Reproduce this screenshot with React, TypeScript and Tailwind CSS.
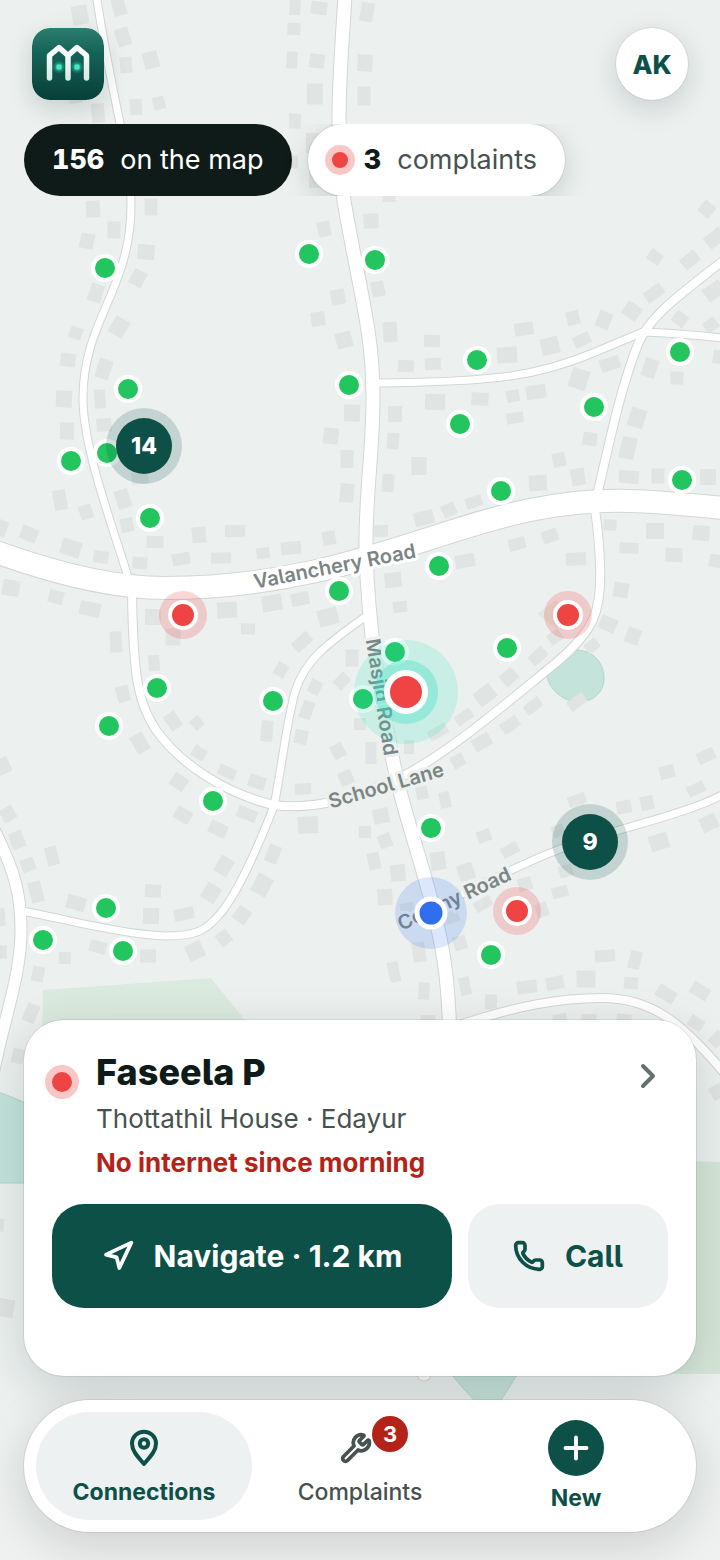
import React from 'react';
import { ChevronRight, Navigation, Phone, Plus, Wrench } from 'lucide-react';

type Building = [x: number, y: number, w: number, h: number, turn: number];
type Point = [x: number, y: number];

const buildings: Building[] = [
  [80, 15, 16, 19, -10], [119, 7, 13, 17, -15], [123, 37, 14, 18, -18], [151, 60, 15, 17, -15], [126, 65, 12, 16, -5],
  [136, 107, 12, 16, -3], [159, 103, 12, 13, -15], [98, 113, 13, 19, -5], [75, 97, 14, 13, -10], [295, 7, 11, 16, 2],
  [319, 8, 16, 13, 8], [294, 29, 13, 12, 3], [292, 60, 11, 17, 2], [317, 61, 15, 14, 8], [315, 94, 16, 21, 0],
  [295, 121, 12, 15, 3], [313, 143, 14, 20, 0], [294, 162, 8, 13, 0], [316, 178, 14, 20, 0], [367, 12, 13, 19, 10],
  [365, 63, 15, 17, 3], [364, 96, 13, 19, 0], [93, 209, 14, 17, -3], [151, 207, 13, 17, 0], [389, 196, 13, 12, 0],
  [114, 230, 13, 17, 0], [87, 241, 14, 15, 12], [146, 252, 17, 15, 5], [138, 278, 14, 16, 28], [96, 293, 14, 18, 18],
  [119, 327, 16, 18, 30], [76, 333, 13, 12, 20], [68, 360, 15, 13, 8], [104, 369, 14, 20, 18], [64, 399, 16, 17, 3],
  [100, 399, 11, 19, -4], [67, 431, 14, 17, 2], [104, 425, 15, 13, -4], [140, 478, 17, 12, -5], [60, 500, 13, 20, -10],
  [123, 499, 14, 19, -18], [86, 512, 13, 14, -18], [324, 229, 13, 15, -12], [338, 297, 14, 15, -12], [318, 319, 14, 14, -8],
  [344, 340, 16, 16, -15], [352, 413, 16, 17, 2], [331, 436, 15, 16, 6], [347, 459, 13, 18, 0], [347, 493, 14, 19, 5],
  [371, 221, 15, 15, -2], [378, 289, 13, 15, -12], [390, 332, 14, 20, -4], [432, 341, 16, 12, 1], [406, 366, 16, 12, 3],
  [433, 364, 16, 12, -4], [507, 355, 20, 16, -4], [524, 329, 19, 13, -8], [550, 346, 18, 17, -15], [573, 318, 13, 14, -15],
  [582, 340, 17, 12, -25], [604, 320, 14, 17, 22], [632, 311, 17, 15, 35], [654, 293, 20, 12, -35], [655, 257, 14, 12, 35],
  [690, 260, 18, 13, -38], [707, 209, 14, 14, 40], [715, 238, 20, 14, -40], [714, 291, 20, 15, -35], [680, 319, 14, 13, 38],
  [711, 325, 14, 12, -35], [610, 364, 20, 13, -18], [579, 379, 18, 20, 18], [650, 368, 14, 19, 18], [677, 378, 13, 13, 2],
  [719, 357, 12, 14, 8], [435, 402, 20, 16, 2], [480, 399, 17, 13, 3], [513, 396, 13, 12, -10], [536, 392, 20, 14, -8],
  [515, 418, 17, 11, -8], [395, 414, 14, 16, 0], [393, 441, 12, 16, 5], [419, 466, 15, 18, 0], [388, 483, 12, 18, 5],
  [590, 439, 14, 13, 8], [637, 418, 16, 19, 18], [628, 448, 15, 22, 12], [629, 477, 20, 13, 5], [658, 476, 13, 15, 0],
  [708, 477, 16, 16, 0], [559, 460, 13, 14, -12], [578, 477, 14, 17, -10], [538, 483, 18, 16, -4], [474, 502, 17, 11, -18],
  [449, 510, 14, 13, -25], [424, 518, 20, 14, -15], [1, 528, 12, 16, 20], [29, 534, 17, 14, 22], [71, 548, 20, 16, 18],
  [101, 557, 15, 12, 8], [127, 525, 13, 14, -12], [155, 542, 17, 12, 2], [199, 535, 14, 16, -5], [235, 531, 20, 12, -2],
  [140, 563, 15, 12, 3], [181, 559, 18, 12, -10], [221, 558, 20, 11, -2], [263, 553, 13, 11, -8], [291, 548, 20, 13, -5],
  [329, 538, 13, 14, -10], [11, 588, 17, 16, 10], [56, 597, 15, 13, 15], [90, 609, 21, 14, 12], [116, 642, 12, 21, -3],
  [153, 617, 16, 16, 0], [173, 637, 15, 17, 0], [154, 663, 11, 16, -5], [123, 694, 13, 16, -15], [227, 610, 20, 16, -4],
  [248, 629, 14, 11, 2], [272, 603, 20, 16, -10], [300, 599, 18, 13, -12], [328, 617, 20, 17, -15], [302, 642, 20, 12, -42],
  [281, 670, 12, 14, 30], [342, 681, 15, 12, -45], [352, 658, 13, 17, 0], [315, 687, 12, 14, 25], [307, 710, 12, 18, 20],
  [267, 731, 12, 21, 5], [301, 737, 13, 14, 12], [173, 721, 13, 17, -35], [197, 723, 11, 12, -40], [140, 743, 14, 19, -30],
  [199, 753, 14, 12, 32], [227, 772, 18, 11, 25], [257, 782, 17, 13, 18], [179, 782, 16, 14, 35], [303, 789, 16, 11, -3],
  [338, 751, 13, 14, -28], [346, 778, 14, 14, -25], [183, 815, 17, 13, 30], [247, 814, 20, 12, 22], [218, 829, 18, 13, 25],
  [308, 825, 20, 17, -3], [3, 766, 14, 16, -25], [8, 814, 14, 14, -30], [360, 724, 12, 12, 0], [381, 531, 14, 12, -3],
  [393, 580, 17, 15, -6], [400, 607, 14, 11, -8], [465, 561, 20, 13, -10], [517, 544, 17, 12, -15], [550, 536, 16, 13, -20],
  [576, 559, 20, 13, -3], [610, 525, 13, 11, 3], [629, 548, 19, 11, 3], [655, 531, 18, 16, 0], [674, 555, 17, 14, 3],
  [701, 533, 17, 15, 5], [716, 561, 14, 13, 10], [621, 590, 15, 15, 10], [608, 624, 17, 14, 25], [633, 636, 14, 16, 20],
  [592, 646, 14, 11, -40], [555, 637, 14, 12, -35], [538, 656, 18, 12, -42], [509, 677, 16, 14, -42], [485, 695, 20, 16, -38],
  [464, 717, 18, 11, -35], [438, 732, 20, 11, -30], [409, 747, 10, 14, 0], [371, 753, 11, 22, 0], [458, 761, 13, 13, -28],
  [482, 742, 19, 13, -30], [510, 725, 19, 12, -35], [533, 706, 18, 11, -38], [577, 702, 19, 11, -35], [422, 793, 12, 13, -10],
  [445, 800, 11, 16, -12], [381, 816, 16, 15, -12], [706, 756, 18, 12, -25], [667, 772, 15, 13, -15], [696, 789, 18, 11, -25],
  [624, 807, 15, 13, -10], [647, 803, 13, 14, -12], [577, 800, 18, 11, -20], [709, 823, 17, 15, -25], [17, 840, 14, 17, -20],
  [52, 856, 12, 19, -15], [28, 865, 14, 13, -20], [36, 892, 13, 21, -15], [76, 903, 19, 14, 15], [153, 891, 16, 13, 3],
  [151, 916, 16, 16, 2], [184, 914, 20, 12, -12], [224, 866, 15, 18, 30], [211, 893, 16, 17, 32], [273, 854, 13, 18, 22],
  [262, 885, 17, 20, 28], [242, 915, 15, 15, 35], [224, 938, 13, 14, -38], [195, 951, 17, 17, -25], [98, 947, 17, 12, 15],
  [148, 956, 16, 13, 0], [65, 958, 12, 12, 3], [38, 974, 12, 15, 10], [31, 1013, 13, 19, 22], [18, 1056, 12, 15, 12],
  [2, 952, 10, 13, 0], [1, 917, 8, 18, -5], [365, 832, 12, 12, 0], [385, 841, 13, 14, -22], [374, 861, 12, 17, -12],
  [398, 873, 15, 17, -5], [385, 897, 15, 16, -3], [438, 861, 15, 18, -8], [484, 836, 14, 12, -22], [510, 850, 18, 11, -28],
  [466, 872, 16, 17, -18], [525, 884, 14, 13, -15], [483, 904, 18, 11, -30], [560, 892, 16, 11, -15], [542, 910, 12, 14, -20],
  [452, 917, 14, 12, -20], [407, 908, 14, 10, -10], [419, 952, 13, 20, -8], [394, 972, 11, 20, -12], [460, 943, 13, 14, -15],
  [424, 991, 11, 17, 2], [465, 986, 11, 18, -12], [491, 1002, 12, 15, 2], [527, 987, 20, 13, -8], [555, 983, 18, 13, -12],
  [586, 979, 19, 17, 0], [605, 956, 20, 12, -4], [635, 960, 12, 18, 15], [631, 983, 14, 12, 5], [666, 994, 20, 13, 32],
  [700, 991, 19, 13, 32], [696, 1023, 15, 12, 32], [717, 1039, 15, 12, -45], [659, 842, 19, 16, -18], [566, 871, 14, 12, -15],
  [558, 831, 12, 12, -20], [560, 1019, 14, 10, -10], [589, 1019, 15, 10, 0], [624, 1019, 15, 10, 5], [428, 1020, 15, 10, 0],
  [717, 1092, 13, 14, -30], [0, 1225, 8, 13, 5], [6, 1308, 16, 18, 10],
];

const roads = [
  { width: 7, d: 'M97 0 C104 45 112 85 121 128 C127 158 131 180 131 205 C131 290 83 320 83 398 C83 445 107 510 129 580' },
  { width: 8, d: 'M132 590 C133 680 139 705 156 730 C180 764 225 793 273 805 C320 811 360 795 403 776 C450 752 510 700 557 662 C594 630 602 612 600 565 Q599 535 595 510' },
  { width: 7, d: 'M376 383 C500 382 540 375 593 353 L643 332 Q690 334 722 338' },
  { width: 8, d: 'M724 260 C680 295 650 315 638 344 C620 390 610 440 596 500' },
  { width: 7, d: 'M372 612 C325 645 305 660 295 692 C286 725 283 760 274 806 C260 842 240 890 220 914 C206 930 198 936 165 936 C120 934 70 920 22 911' },
  { width: 11, d: 'M-8 826 C15 870 21 895 21 930 C21 975 5 1015 -6 1070' },
  { width: 7, d: 'M432 909 C500 875 550 850 590 839 C640 823 690 812 724 794' },
  { width: 8, d: 'M456 1026 C520 1005 560 998 602 998 C650 998 680 1020 726 1075' },
  { width: 13, d: 'M345 -4 C341 60 339 80 339 120 C339 190 345 205 353 250 C368 325 373 350 373 400 C373 450 365 500 366 550 C368 630 380 700 396 775 C408 830 438 905 446 975 Q451 1020 450 1080 Q448 1240 424 1374' },
  { width: 22, d: 'M-4 552 C60 575 115 588 165 588 C330 588 430 530 530 510 C600 496 640 500 724 508' },
];

const homes: Point[] = [
  [105, 268], [309, 254], [375, 260], [128, 389], [349, 385], [477, 360], [594, 407], [680, 352], [460, 424],
  [71, 461], [107, 453], [150, 518], [501, 491], [682, 480], [439, 566], [339, 591], [157, 688], [109, 726],
  [273, 701], [507, 648], [395, 652], [363, 699], [213, 801], [431, 828], [106, 908], [43, 940], [123, 951], [491, 955],
];

const faults: Point[] = [[183, 615], [568, 615], [517, 911]];

const clusters: { at: Point; count: number }[] = [
  { at: [144, 446], count: 14 },
  { at: [590, 842], count: 9 },
];

function StreetMap() {
  return (
    <svg
      className="absolute inset-0 h-full w-full font-['Inter','Liberation_Sans',sans-serif]"
      viewBox="0 0 720 1560"
      preserveAspectRatio="xMidYMin slice"
      role="img"
      aria-label="Map of connections"
    >
      <rect width="720" height="1560" fill="#ecf1f0" />
      <path d="M43 990 L211 978 L244 1019 L290 1080 H41Z" fill="#dbeadf" />
      <path d="M640 1160 L720 1162 V1374 H640Z" fill="#d5e6d8" />
      <path d="M537 614 L556 600 L570 612 L556 628Z" fill="#e0e9e0" />
      <g fill="#c3e3db" stroke="#b3d4cc" strokeWidth="1">
        <path d="M-2 1092 Q14 1097 40 1110 V1183 H-2Z" />
        <path d="M448 1370 Q462 1388 476 1402 H500 Q510 1386 520 1370Z" />
        <path d="M567 651 C590 646 604 661 604 678 C604 696 588 703 576 702 C560 700 547 686 547 674 C549 661 558 653 567 651Z" />
      </g>
      <g fill="#e0e4e3">
        {buildings.map(([x, y, w, h, turn]) => (
          <rect key={`${x}-${y}`} x={x - w / 2} y={y - h / 2} width={w} height={h} transform={`rotate(${turn} ${x} ${y})`} />
        ))}
      </g>
      <g fill="none" stroke="#d2d6d5" strokeLinecap="round" strokeLinejoin="round">
        {roads.map((r) => <path key={r.d} d={r.d} strokeWidth={r.width + 2} />)}
      </g>
      <g fill="none" stroke="#ffffff" strokeLinecap="round" strokeLinejoin="round">
        {roads.map((r) => <path key={r.d} d={r.d} strokeWidth={r.width} />)}
      </g>
      <g fill="#7b8583" stroke="#ecf1f0" strokeWidth="6" strokeLinejoin="round" paintOrder="stroke" fontSize="20" fontWeight="600" textAnchor="middle">
        <text transform="translate(336 573) rotate(-11)" stroke="#ffffff">Valanchery Road</text>
        <text transform="translate(375 698) rotate(81)">Masjid Road</text>
        <text transform="translate(388 792) rotate(-16)">School Lane</text>
        <text transform="translate(457 905) rotate(-25)">Colony Road</text>
      </g>
      {homes.map(([x, y]) => (
        <circle key={`${x}-${y}`} cx={x} cy={y} r="12" fill="#22c55e" stroke="#ffffff" strokeWidth="4" />
      ))}
      {faults.map(([x, y]) => (
        <g key={`${x}-${y}`}>
          <circle cx={x} cy={y} r="24" fill="#ef4444" fillOpacity="0.22" />
          <circle cx={x} cy={y} r="13" fill="#ef4444" stroke="#ffffff" strokeWidth="4" />
        </g>
      ))}
      {clusters.map(({ at: [x, y], count }) => (
        <g key={count}>
          <circle cx={x} cy={y} r="38" fill="#0d5047" fillOpacity="0.18" />
          <circle cx={x} cy={y} r="28" fill="#0d5047" />
          <text x={x} y={y + 8} fill="#ffffff" fontSize="23" fontWeight="800" textAnchor="middle">{count}</text>
        </g>
      ))}
      <circle cx="406" cy="692" r="52" fill="#2ee6bd" fillOpacity="0.18" />
      <circle cx="406" cy="692" r="32" fill="#2ee0c0" fillOpacity="0.34" />
      <circle cx="406" cy="692" r="19" fill="#ef4444" stroke="#ffffff" strokeWidth="6" />
      <circle cx="431" cy="913" r="36" fill="#3b72f0" fillOpacity="0.18" />
      <circle cx="431" cy="913" r="14" fill="#2f6fed" stroke="#ffffff" strokeWidth="5" />
    </svg>
  );
}

function Logo() {
  return (
    <svg className="size-[72px] rounded-[18px] shadow-[0_8px_24px_rgba(15,27,24,0.16)]" viewBox="0 0 72 72" role="img" aria-label="Home">
      <defs>
        <linearGradient id="tile" x1="0" y1="0" x2="0" y2="1">
          <stop offset="0" stopColor="#2b7e70" />
          <stop offset="0.35" stopColor="#146357" />
          <stop offset="1" stopColor="#083e38" />
        </linearGradient>
        <radialGradient id="lamp">
          <stop offset="0" stopColor="#2fd3ad" />
          <stop offset="0.4" stopColor="#22b896" stopOpacity="0.8" />
          <stop offset="1" stopColor="#17927b" stopOpacity="0" />
        </radialGradient>
        <linearGradient id="frame" x1="0" y1="0" x2="0" y2="1">
          <stop offset="0" stopColor="#ffffff" />
          <stop offset="1" stopColor="#d7ebe6" />
        </linearGradient>
      </defs>
      <rect width="72" height="72" rx="18" fill="url(#tile)" />
      <circle cx="27" cy="39" r="7" fill="url(#lamp)" />
      <circle cx="45" cy="39" r="7" fill="url(#lamp)" />
      <rect x="24.500" y="36.500" width="5" height="5" rx="1" fill="#4be6c0" />
      <rect x="42.500" y="36.500" width="5" height="5" rx="1" fill="#4be6c0" />
      <path d="M17.500 50 V27.500 L27 19.500 L36 27.500 L45 19.500 L54.500 27.500 V50 M36 27.500 V50" fill="none" stroke="url(#frame)" strokeWidth="5.500" strokeLinecap="round" strokeLinejoin="round" />
    </svg>
  );
}

function PinIcon() {
  return (
    <svg className="size-10" viewBox="0 0 40 40" fill="none" stroke="currentColor" strokeWidth="4" strokeLinejoin="round" aria-hidden="true">
      <path d="M20 36 C14 29 8 23 8 15.500 A12 11.800 0 0 1 32 15.500 C32 23 26 29 20 36Z" />
      <circle cx="20" cy="15.500" r="4.200" />
    </svg>
  );
}

export default function App() {
  return (
    <div className="relative flex min-h-screen flex-col overflow-hidden bg-[#ecf1f0] font-['Inter','Liberation_Sans',sans-serif] text-[#0f1b18] [font-feature-settings:'cv05']">
      <StreetMap />
      <div className="pointer-events-none absolute inset-x-0 bottom-0 h-48 bg-linear-to-t from-[#eff1f0] to-transparent" />

      <header className="relative flex items-center justify-between px-8 pt-7">
        <Logo />
        <button className="size-[72px] rounded-full bg-white text-[26px] font-extrabold text-[#0d5047] shadow-[0_0_0_1px_rgba(15,27,24,0.06),0_8px_28px_rgba(15,27,24,0.16)]">
          AK
        </button>
      </header>

      <div className="relative mt-6 flex gap-4 overflow-hidden px-6">
        <button className="flex h-[72px] items-center gap-4 rounded-full bg-[#0f1b18] px-7 text-[27px] text-white">
          <b className="font-extrabold tabular-nums">156</b>
          <span>on the map</span>
        </button>
        <button className="flex h-[72px] items-center rounded-full bg-white pr-7 pl-6 text-[27px] shadow-[0_0_0_1px_rgba(15,27,24,0.08),0_8px_28px_rgba(15,27,24,0.16)]">
          <i className="mr-4 size-4 rounded-full bg-[#ef4444] ring-[7px] ring-[#fac7c7]" />
          <b className="mr-4 font-extrabold">3</b>
          <span className="text-[#47514f]">complaints</span>
        </button>
      </div>

      <main className="relative mx-6 mt-auto rounded-[40px] bg-white px-7 pt-8 pb-[68px] shadow-[0_0_0_1px_rgba(15,27,24,0.08),0_12px_48px_rgba(15,27,24,0.16)]">
        <a href="#faseela" className="flex items-start">
          <i className="mt-5 mr-6 size-5 shrink-0 rounded-full bg-[#ef4444] ring-[7px] ring-[#fac7c7]" />
          <span className="flex-1">
            <strong className="block text-[36px] leading-[41px] font-extrabold">Faseela P</strong>
            <span className="mt-2 block text-[26px] leading-9 text-[#47514f]">Thottathil House · Edayur</span>
            <span className="mt-2 block text-[26px] leading-9 font-bold text-[#b42318]">No internet since morning</span>
          </span>
          <ChevronRight className="mt-1 size-10 text-[#66706d]" strokeWidth={2.4} />
        </a>
        <div className="mt-[23px] flex gap-4">
          <button className="flex h-[104px] flex-2 items-center justify-center gap-5 rounded-[32px] bg-[#0d5047] text-[30px] font-bold text-white">
            <Navigation className="size-8" strokeWidth={2.8} />
            Navigate · 1.2 km
          </button>
          <button className="flex h-[104px] flex-1 items-center justify-center gap-5 rounded-[32px] bg-[#edf1f2] text-[30px] font-bold text-[#0d5047]">
            <Phone className="size-8" strokeWidth={2.8} />
            Call
          </button>
        </div>
      </main>

      <nav className="relative mx-6 mt-6 mb-7 grid grid-cols-3 rounded-full bg-white p-3 text-[23px] leading-8 shadow-[0_0_0_1px_rgba(15,27,24,0.08),0_12px_48px_rgba(15,27,24,0.16)]">
        <a href="#connections" className="flex h-[108px] flex-col items-center gap-2 rounded-full bg-[#edf1f2] pt-4 font-bold text-[#0d5047]">
          <PinIcon />
          Connections
        </a>
        <a href="#complaints" className="flex h-[108px] flex-col items-center gap-2 pt-4 font-medium text-[#47514f]">
          <span className="relative flex size-10 items-center">
            <Wrench className="size-8" strokeWidth={2.8} />
            <b className="absolute -top-3 left-8 flex size-9 items-center justify-center rounded-full bg-[#b42318] text-[22px] font-bold text-white">3</b>
          </span>
          Complaints
        </a>
        <a href="#new" className="flex h-[108px] flex-col items-center gap-1.5 pt-2 font-bold text-[#0d5047]">
          <span className="flex size-14 items-center justify-center rounded-full bg-[#0d5047] text-white">
            <Plus className="size-9" strokeWidth={2.6} />
          </span>
          New
        </a>
      </nav>
    </div>
  );
}
